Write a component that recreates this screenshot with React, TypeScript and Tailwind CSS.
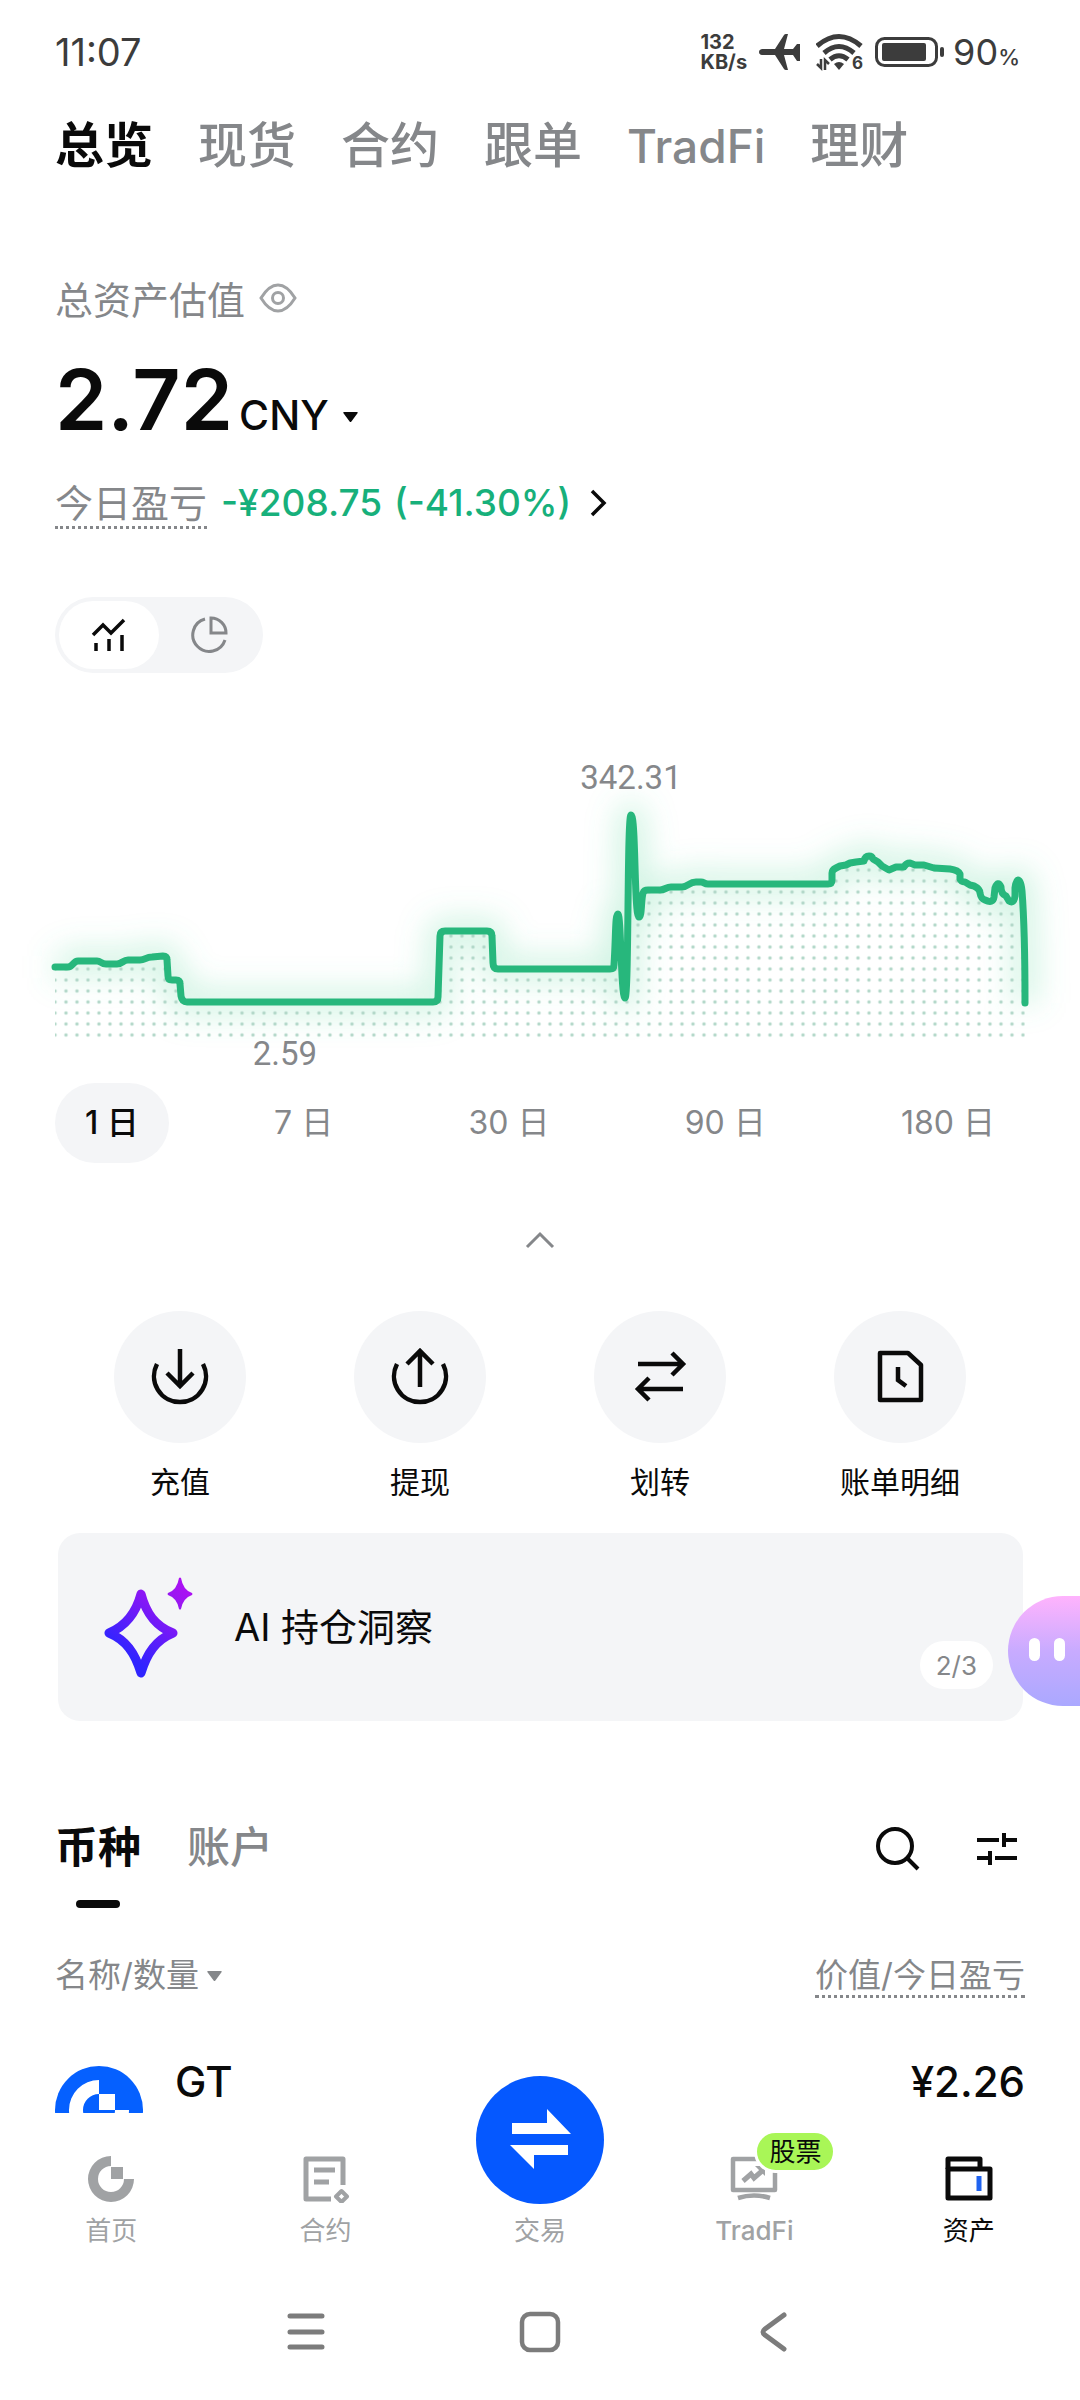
import { useState } from "react";
import type { ReactNode } from "react";

const CHART_LINE =
  "M55 967H68C73 967 73 961 78 961H97C101 961 101 964 106 964H117C122 964 123 960 128 960H140C145 960 146 957 152 957L163 956Q167 956 167 960L168 976Q168 980 172 980H176Q180 980 180 984L181 996Q182 1002 187 1002H433Q438 1002 438 997L440 936Q440 931 445 931H487Q492 931 492 936L493 963Q493 969 498 969H610Q614 969 614 965C616 935 615 914 618 914C621 914 621 998 625 998C629 998 627 815 631 815C636 815 634 917 639 917C642 917 641 900 643 893Q644 890 648 890H660C665 890 666 887 671 887H682C688 887 689 882 696 882H701C704 882 704 884 708 884H828Q832 884 832 880V873Q832 870 836 868L840 866L846 865L850 863L856 862L864 861Q865 856 869 856Q872 856 873 859L878 862L882 866L889 870L896 867L904 867Q906 863 910 863L915 865H924L934 868L950 869Q958 870 960 874V879Q961 882 965 882L970 885L974 886Q980 889 980 893Q981 899 985 900Q993 904 994 897L995 888Q998 880 1001 887Q1001 894 1006 896L1009 901Q1014 904 1015 896L1015 888Q1016 880 1018 880Q1021 880 1022 891Q1025 930 1025 1003";

const mainTabs = ["总览", "现货", "合约", "跟单", "TradFi", "理财"];
const ranges = ["1 日", "7 日", "30 日", "90 日", "180 日"];

const actions: { label: string; icon: ReactNode }[] = [
  {
    label: "充值",
    icon: (
      <>
        <path d="M7 17A26 26 0 1 0 53 17" />
        <path d="M30 2V38M17 26L30 39L43 26" />
      </>
    ),
  },
  {
    label: "提现",
    icon: (
      <>
        <path d="M7 17A26 26 0 1 0 53 17" />
        <path d="M30 40V5M17 17L30 4L43 17" />
      </>
    ),
  },
  {
    label: "划转",
    icon: <path d="M8 17H52M42 6L53 17L42 28M53 42H9M19 31L8 42L19 53" />,
  },
  {
    label: "账单明细",
    icon: (
      <>
        <path d="M10 6H38L51 18V53H10Z" strokeLinejoin="round" />
        <path d="M28 20V33L36 39" />
      </>
    ),
  },
];

function Triangle({ className }: { className?: string }) {
  return (
    <svg width="15" height="10" viewBox="0 0 15 10" fill="currentColor" className={className}>
      <path d="M1 0H14Q15.400 0 14.500 1.200L8.400 9.400Q7.500 10.400 6.600 9.400L.5 1.200Q-.4 0 1 0Z" />
    </svg>
  );
}

function StatusBar() {
  return (
    <div className="flex h-[104px] items-center justify-between pr-[60px] pl-[55px] text-[#3c3c3c]">
      <span className="text-[38px] leading-10">11:07</span>
      <div className="flex items-center">
        <div className="mr-3 text-[20px] leading-5 font-bold">
          <div>132</div>
          <div>KB/s</div>
        </div>
        <svg width="41" height="36" viewBox="0 0 41 36" fill="currentColor" className="mr-4">
          <path d="M3 15H16L25 1Q25.600 0 27 0H29L25 15H34L38 10H41V27H38L34 21H25L29 36H27Q25.600 36 25 35L16 21H3Q0 20.500 0 18T3 15Z" />
        </svg>
        <svg width="50" height="44" viewBox="0 -2 50 44" fill="none" className="mr-[9px]">
          <g stroke="currentColor" strokeWidth="5">
            <path d="M1 14Q23 -5 45 14" />
            <path d="M8 21Q23 8 38 21" />
            <path d="M14 27.500Q23 20 32 27.500" />
          </g>
          <path d="M18 32Q23 28 28 32L23 38Z" fill="currentColor" />
          <path d="M5 27V36L1 32M9 38V28L13 32" stroke="currentColor" strokeWidth="2.500" />
          <text x="36" y="37" fontSize="17" fontWeight="700" fill="currentColor">
            6
          </text>
        </svg>
        <svg width="70" height="30" viewBox="0 0 70 30" className="mr-2">
          <rect x="1.500" y="1.500" width="60" height="27" rx="8" fill="none" stroke="currentColor" strokeWidth="3" />
          <rect x="7" y="6" width="44" height="18" rx="2" fill="currentColor" />
          <rect x="65" y="10" width="4" height="10" rx="2" fill="currentColor" />
        </svg>
        <span className="text-[36px] leading-10">90</span>
        <span className="mt-[9px] text-[22px] leading-6 font-medium">%</span>
      </div>
    </div>
  );
}

function AssetChart() {
  return (
    <svg viewBox="0 740 1080 335" className="mt-[67px] block w-full" role="img" aria-label="资产走势">
      <defs>
        <pattern id="dots" x="49.500" y="1029.500" width="11" height="11" patternUnits="userSpaceOnUse">
          <circle cx="5.500" cy="5.500" r="1.700" fill="#b0d6c7" />
        </pattern>
        <filter id="glow" x="0" y="740" width="1080" height="335" filterUnits="userSpaceOnUse">
          <feGaussianBlur stdDeviation="15" />
        </filter>
      </defs>
      <path d={CHART_LINE} fill="none" stroke="#5fd99f" strokeWidth="26" strokeOpacity="0.280" filter="url(#glow)" />
      <path d={`${CHART_LINE}L1025 1038H55Z`} fill="url(#dots)" />
      <path
        d={CHART_LINE}
        fill="none"
        stroke="#27b77c"
        strokeWidth="7"
        strokeLinecap="round"
        strokeLinejoin="round"
      />
      <g fill="#85878a" fontSize="33" fontFamily="Roboto, sans-serif">
        <text x="631" y="789" textAnchor="middle">
          342.31
        </text>
        <text x="285" y="1065" textAnchor="middle">
          2.59
        </text>
      </g>
    </svg>
  );
}

function Summary() {
  return (
    <section className="px-[55px] pt-24">
      <div className="flex h-14 items-center gap-[14px] text-[38px] text-[#85878a]">
        <span>总资产估值</span>
        <button aria-label="隐藏资产" className="mb-1">
          <svg width="38" height="30" viewBox="0 0 38 30" fill="none" stroke="#a0a2a4" strokeWidth="3">
            <path d="M2 15Q10 2 19 2T36 15Q28 28 19 28T2 15Z" />
            <circle cx="19" cy="15" r="5.500" />
          </svg>
        </button>
      </div>
      <div className="mt-7 flex h-[88px] items-baseline">
        <span className="text-[84px] leading-[88px] font-semibold">2.72</span>
        <button className="ml-[6px] flex items-center text-[41px] leading-[44px] font-medium">
          CNY
          <Triangle className="mt-1 ml-[14px]" />
        </button>
      </div>
      <div className="mt-9 flex items-start text-[38px] leading-[46px]">
        <span className="border-b-[3px] border-dotted border-[#85878a] text-[#85878a]">今日盈亏</span>
        <button className="ml-[14px] flex items-center gap-3 text-[37px] font-medium text-[#17b07b]">
          <span>-¥208.75</span>
          <span>(-41.30%)</span>
          <svg width="18" height="28" viewBox="0 0 18 28" fill="none" stroke="#0a0a0a" strokeWidth="3.500" className="ml-[6px]">
            <path d="M3 2L15 14L3 26" />
          </svg>
        </button>
      </div>
      <div className="mt-[68px] flex h-19 w-52 items-center rounded-full bg-[#f4f5f7] p-1">
        <button aria-label="走势图" className="flex h-full flex-1 items-center justify-center rounded-full bg-white">
          <svg width="36" height="36" viewBox="0 0 36 36" fill="none" stroke="#0a0a0a" strokeWidth="3.500">
            <path d="M2 18L12 8L20 16L33 3M5 34V26M18 34V22M31 34V18" />
          </svg>
        </button>
        <button aria-label="资产分布" className="flex h-full flex-1 items-center justify-center">
          <svg width="38" height="38" viewBox="0 0 38 38" fill="none" stroke="#85878a" strokeWidth="3">
            <path d="M15 3A16.500 16.500 0 1 0 35 24" />
            <path d="M21 2A15 15 0 0 1 36 17H21Z" />
          </svg>
        </button>
      </div>
    </section>
  );
}

function InsightCard() {
  return (
    <div className="relative mt-[31px] pr-[57px] pl-[58px]">
      <div className="relative flex h-[188px] items-center rounded-[22px] bg-[#f4f5f7] pl-[46px]">
        <svg width="90" height="102" viewBox="0 0 90 102" className="mr-10">
          <defs>
            <linearGradient id="spark" x1="0.200" y1="1" x2="0.800" y2="0">
              <stop offset="0.200" stopColor="#2f24ff" />
              <stop offset="0.900" stopColor="#8d16f5" />
            </linearGradient>
            <linearGradient id="sparkSmall" x1="0" y1="1" x2="1" y2="0">
              <stop offset="0" stopColor="#8c1cf0" />
              <stop offset="1" stopColor="#b80cf5" />
            </linearGradient>
          </defs>
          <path
            d="M37 18C42 37 51 50 69 57C52 64 43 77 37 97C31 77 22 64 5 57C22 50 32 37 37 18Z"
            fill="none"
            stroke="url(#spark)"
            strokeWidth="9"
            strokeLinejoin="round"
          />
          <path
            d="M75 2Q76 1 77 2Q79 14 88 17Q89 18 88 19Q79 22 77 33Q76 34 75 33Q73 22 64 19Q63 18 64 17Q73 14 75 2Z"
            fill="url(#sparkSmall)"
          />
        </svg>
        <span className="text-[38px] leading-[46px]">AI 持仓洞察</span>
        <span className="absolute right-[30px] bottom-8 flex h-12 items-center rounded-full bg-white px-4 text-[26px] text-[#85878a]">
          2/3
        </span>
      </div>
      <button
        aria-label="助手"
        className="absolute top-[63px] right-0 flex h-[110px] w-[72px] items-center gap-[14px] rounded-l-full bg-linear-to-b from-[#ffb3fd] via-[#c8abff] via-50% to-[#aaa8ff] pl-[21px]"
      >
        <span className="mb-1 h-[23px] w-[11px] rounded-full bg-white" />
        <span className="mb-1 h-[23px] w-[11px] rounded-full bg-white" />
      </button>
    </div>
  );
}

function Holdings() {
  return (
    <section className="px-[55px]">
      <div className="mt-[98px] flex items-start justify-between">
        <div className="flex gap-[46px] text-[43px] leading-[56px]">
          <button className="flex flex-col items-center font-bold">
            币种
            <span className="mt-[25px] h-2 w-11 rounded-full bg-[#0a0a0a]" />
          </button>
          <button className="self-start font-medium text-[#85878a]">账户</button>
        </div>
        <div className="mt-2 mr-[7px] flex gap-14">
          <button aria-label="搜索">
            <svg width="44" height="44" viewBox="0 0 44 44" fill="none" stroke="#0a0a0a" strokeWidth="4">
              <circle cx="19" cy="19" r="17" />
              <path d="M31 31L42 42" />
            </svg>
          </button>
          <button aria-label="筛选">
            <svg width="42" height="44" viewBox="0 0 42 44" fill="none" stroke="#0a0a0a" strokeWidth="4">
              <path d="M1 13H23M28 6V20M28 13H41M1 31H14M14 24V38M19 31H41" />
            </svg>
          </button>
        </div>
      </div>
      <table className="mt-[48px] w-full">
        <thead>
          <tr className="align-top text-[33px] leading-[39px] text-[#85878a]">
            <th className="text-left font-normal">
              <button className="flex items-center gap-2">
                名称/数量
                <Triangle />
              </button>
            </th>
            <th className="text-right font-normal">
              <span className="inline-block border-b-[3px] border-dotted border-[#85878a]">价值/今日盈亏</span>
            </th>
          </tr>
        </thead>
        <tbody>
          <tr className="align-top text-[42px] leading-[44px] font-medium">
            <td className="pt-[62px]">
              <div className="flex items-start gap-8">
                <svg width="88" height="88" viewBox="0 0 88 88" className="mt-[6px]">
                  <circle cx="44" cy="44" r="44" fill="#0560ff" />
                  <path d="M44 14A30 30 0 1 0 74 44H60A16 16 0 1 1 44 28Z" fill="#fff" />
                  <rect x="44" y="28" width="16" height="16" fill="#fff" />
                </svg>
                GT
              </div>
            </td>
            <td className="pt-[62px] text-right">¥2.26</td>
          </tr>
        </tbody>
      </table>
    </section>
  );
}

const navItems: { label: string; icon: ReactNode }[] = [
  {
    label: "首页",
    icon: (
      <g fill="#a0a2a4">
        <path d="M24 1A23 23 0 1 0 47 24H37A13 13 0 1 1 24 11Z" />
        <rect x="24" y="12" width="12" height="12" />
      </g>
    ),
  },
  {
    label: "合约",
    icon: (
      <g fill="none" stroke="#a0a2a4" strokeWidth="5">
        <path d="M41 30V4H4V44H29" strokeLinejoin="round" />
        <path d="M12 15H33M12 27H27" />
        <path d="M39.500 36L45 41.500L39.500 47L34 41.500Z" strokeWidth="4" strokeLinejoin="round" />
      </g>
    ),
  },
  { label: "交易", icon: null },
  {
    label: "TradFi",
    icon: (
      <g fill="none" stroke="#a0a2a4" strokeWidth="4.500">
        <path d="M3 4H45V35H3Z" strokeLinejoin="round" />
        <path d="M13 26L21 19L24 23L32 16" strokeWidth="5" />
        <path d="M25 11H35V21Z" fill="#a0a2a4" stroke="none" />
        <path d="M8 43Q24 38 40 43" />
      </g>
    ),
  },
  {
    label: "资产",
    icon: (
      <g fill="none" stroke="#0a0a0a" strokeWidth="5" strokeLinejoin="round">
        <path d="M3 14V4H35V14" />
        <path d="M3 14H45V43H3Z" />
        <path d="M34 21V36" stroke="#1f63f0" />
      </g>
    ),
  },
];

function BottomNav() {
  return (
    <nav className="relative z-10 grid grid-cols-5 bg-white px-1 pt-[42px] text-[26px] leading-8 text-[#a0a2a4]">
      {navItems.map((item) => (
        <a
          key={item.label}
          href="#"
          className={`relative flex flex-col items-center gap-3 ${
            item.label === "资产" ? "text-[#0a0a0a]" : ""
          } ${item.label === "TradFi" ? "font-medium" : ""}`}
        >
          <svg width="48" height="48" viewBox="0 0 48 48">
            {item.icon}
          </svg>
          <span>{item.label}</span>
          {item.label === "TradFi" && (
            <span className="absolute -top-[25px] left-1/2 rounded-full border-[3px] border-white bg-[#a9f657] px-3 leading-[37px] font-normal text-[#0a0a0a]">
              股票
            </span>
          )}
          {item.label === "交易" && (
            <span className="absolute -top-[79px] flex size-32 items-center justify-center rounded-full bg-[#0558ff]">
              <svg width="62" height="62" viewBox="0 0 62 62" fill="#fff">
                <path d="M3 14H38V0L62 25H3Z" />
                <path d="M59 46H25V60L1 36H59Z" />
              </svg>
            </span>
          )}
        </a>
      ))}
    </nav>
  );
}

function SystemNav() {
  return (
    <div className="mx-auto grid h-[153px] w-[65%] grid-cols-3 items-start justify-items-center pt-16">
      <button aria-label="最近任务">
        <svg width="42" height="42" viewBox="0 0 42 42" stroke="#7c7c7c" strokeWidth="5" strokeLinecap="round">
          <path d="M5 5H37M5 21H37M5 36H37" />
        </svg>
      </button>
      <button aria-label="主屏幕">
        <svg width="42" height="42" viewBox="0 0 42 42" fill="none" stroke="#7c7c7c" strokeWidth="4.500">
          <rect x="3" y="3" width="36" height="36" rx="8" />
        </svg>
      </button>
      <button aria-label="返回">
        <svg width="42" height="42" viewBox="0 0 42 42" fill="none" stroke="#7c7c7c" strokeWidth="5" strokeLinecap="round">
          <path d="M31 4L12 18Q8 21 12 24L31 38" />
        </svg>
      </button>
    </div>
  );
}

export default function App() {
  const [tab, setTab] = useState("总览");
  const [range, setRange] = useState("1 日");

  return (
    <div className="flex h-screen flex-col bg-white font-['Inter','Noto_Sans_CJK_SC',sans-serif] text-[#0a0a0a]">
      <main className="min-h-0 flex-1 overflow-hidden">
        <StatusBar />
        <div className="flex gap-[45px] px-[55px] pt-3 text-[49px] leading-[60px] whitespace-nowrap">
          {mainTabs.map((name) => (
            <button
              key={name}
              onClick={() => setTab(name)}
              className={`${tab === name ? "font-bold" : "font-medium text-[#85878a]"} ${
                name === "TradFi" ? "text-[46px]" : ""
              }`}
            >
              {name}
            </button>
          ))}
        </div>

        <Summary />
        <AssetChart />

        <div className="mt-2 flex justify-between px-[55px]">
          {ranges.map((name) => (
            <button
              key={name}
              onClick={() => setRange(name)}
              className={`h-20 rounded-full px-[30px] text-[32px] ${
                range === name ? "bg-[#f4f5f7] font-medium" : "text-[#85878a]"
              }`}
            >
              {name}
            </button>
          ))}
        </div>

        <button aria-label="收起" className="mx-auto mt-[57px] flex h-10 w-10 items-center justify-center">
          <svg width="30" height="18" viewBox="0 0 30 18" fill="none" stroke="#85878a" strokeWidth="3">
            <path d="M2 16L15 3L28 16" />
          </svg>
        </button>

        {/* Quick actions */}
        <div className="mt-[51px] grid grid-cols-4 px-[60px]">
          {actions.map((action) => (
            <button key={action.label} className="flex flex-col items-center text-3xl leading-10">
              <span className="mb-[19px] flex size-[132px] items-center justify-center rounded-full bg-[#f4f5f7]">
                <svg width="60" height="60" viewBox="0 0 60 60" fill="none" stroke="#0a0a0a" strokeWidth="4.500">
                  {action.icon}
                </svg>
              </span>
              {action.label}
            </button>
          ))}
        </div>

        <InsightCard />
        <Holdings />
      </main>

      <BottomNav />
      <SystemNav />
    </div>
  );
}
